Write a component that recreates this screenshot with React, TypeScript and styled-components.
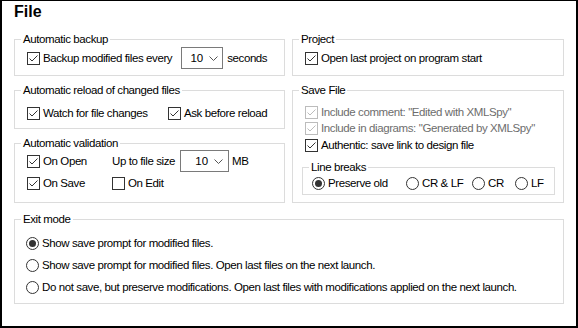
import React from 'react';
import styled, { createGlobalStyle } from 'styled-components';

const GlobalStyle = createGlobalStyle`
  html, body {
    margin: 0;
    padding: 0;
    background: #fff;
  }
  body {
    font-family: "Liberation Sans", Arial, sans-serif;
  }
`;

const Frame = styled.div`
  box-sizing: border-box;
  width: 578px;
  height: 328px;
  border: 2px solid #000;
  border-top-width: 1px;
  padding: 2px 12px 0 12px;
  background: #fff;
  color: #000;
  font-size: 11.5px;
  letter-spacing: -0.4px;
`;

const Title = styled.h1`
  margin: 0 0 11px;
  font-size: 16px;
  line-height: 18px;
  font-weight: bold;
  letter-spacing: 0;
`;

const Columns = styled.div`
  display: grid;
  grid-template-columns: 271px 272px;
  column-gap: 7px;
  align-items: start;
`;

const Column = styled.div`
  display: flex;
  flex-direction: column;
  gap: 7px;
`;

const GroupBox = styled.fieldset<{ $pb: number; $mt?: number; $mx?: string }>`
  margin: ${(p) => p.$mt ?? 0}px ${(p) => p.$mx ?? '0 0'};
  min-width: 0;
  border: 1px solid #dcdcdc;
  padding: 0 0 ${(p) => p.$pb}px 6px;
`;

const Legend = styled.legend`
  padding: 0 2px;
  font-size: 11.5px;
  line-height: 14px;
`;

const Row = styled.div<{ $h: number; $mt?: number; $pl?: number }>`
  display: flex;
  align-items: center;
  height: ${(p) => p.$h}px;
  margin-top: ${(p) => p.$mt ?? 0}px;
  padding-left: ${(p) => p.$pl ?? 6}px;
  white-space: nowrap;
`;

const Item = styled.label<{ $w?: number; $disabled?: boolean }>`
  display: inline-flex;
  align-items: center;
  gap: 3px;
  width: ${(p) => (p.$w ? `${p.$w}px` : 'auto')};
  flex: none;
  color: ${(p) => (p.$disabled ? '#6d6d6d' : '#000')};
  line-height: 14px;
`;

const Text = styled.span<{ $ml?: number }>`
  margin-left: ${(p) => p.$ml ?? 0}px;
  line-height: 14px;
`;

const Combo = styled.div<{ $w: number; $ml: number; $pr: number }>`
  box-sizing: border-box;
  display: flex;
  align-items: center;
  justify-content: flex-end;
  width: ${(p) => p.$w}px;
  height: 22px;
  margin-left: ${(p) => p.$ml}px;
  padding-right: ${(p) => p.$pr}px;
  border: 1px solid #7a7a7a;
  background: #fff;
  letter-spacing: 0;

  svg {
    margin-left: 6px;
  }
`;

const Checkbox: React.FC<{ checked?: boolean; disabled?: boolean }> = ({ checked, disabled }) => {
  const c = disabled ? '#bcbcbc' : '#333';
  return (
    <svg width="13" height="13" viewBox="0 0 13 13">
      <rect x="0.5" y="0.5" width="12" height="12" fill="#fff" stroke={c} />
      {checked && <path d="M2.5 6.5 L5 9 L10.5 3.5" fill="none" stroke={c} strokeWidth="1" />}
    </svg>
  );
};

const Radio: React.FC<{ checked?: boolean }> = ({ checked }) => (
  <svg width="13" height="13" viewBox="0 0 13 13">
    <circle cx="6.5" cy="6.5" r="6" fill="#fff" stroke="#333" />
    {checked && <circle cx="6.5" cy="6.5" r="3.5" fill="#333" />}
  </svg>
);

const Chevron = () => (
  <svg width="9" height="5" viewBox="0 0 9 5">
    <path d="M0.5 0.5 L4.5 4.5 L8.5 0.5" fill="none" stroke="#555" />
  </svg>
);

const Check: React.FC<{ label: string; checked?: boolean; disabled?: boolean; w?: number }> = ({
  label,
  checked,
  disabled,
  w,
}) => (
  <Item $w={w} $disabled={disabled}>
    <Checkbox checked={checked} disabled={disabled} />
    {label}
  </Item>
);

const Option: React.FC<{ label: string; checked?: boolean; w?: number }> = ({ label, checked, w }) => (
  <Item $w={w}>
    <Radio checked={checked} />
    {label}
  </Item>
);

export default function App() {
  return (
    <>
      <GlobalStyle />
      <Frame>
        <Title>File</Title>
        <Columns>
          <Column>
            <GroupBox $pb={6}>
              <Legend>Automatic backup</Legend>
              <Row $h={22} $mt={1}>
                <Check label="Backup modified files every" checked />
                <Combo $w={42} $ml={9} $pr={4}>
                  10
                  <Chevron />
                </Combo>
                <Text $ml={4}>seconds</Text>
              </Row>
            </GroupBox>

            <GroupBox $pb={6}>
              <Legend>Automatic reload of changed files</Legend>
              <Row $h={18} $mt={7}>
                <Check label="Watch for file changes" checked w={141} />
                <Check label="Ask before reload" checked />
              </Row>
            </GroupBox>

            <GroupBox $pb={10}>
              <Legend>Automatic validation</Legend>
              <Row $h={22}>
                <Check label="On Open" checked w={85} />
                <Text>Up to file size</Text>
                <Combo $w={49} $ml={5} $pr={5}>
                  10
                  <Chevron />
                </Combo>
                <Text $ml={3}>MB</Text>
              </Row>
              <Row $h={18} $mt={2}>
                <Check label="On Save" checked w={85} />
                <Check label="On Edit" />
              </Row>
            </GroupBox>
          </Column>

          <Column>
            <GroupBox $pb={6}>
              <Legend>Project</Legend>
              <Row $h={22} $mt={1}>
                <Check label="Open last project on program start" checked />
              </Row>
            </GroupBox>

            <GroupBox $pb={7}>
              <Legend>Save File</Legend>
              <Row $h={16} $mt={7}>
                <Check label={'Include comment: "Edited with XMLSpy"'} checked disabled />
              </Row>
              <Row $h={16}>
                <Check label={'Include in diagrams: "Generated by XMLSpy"'} checked disabled />
              </Row>
              <Row $h={16} $mt={1}>
                <Check label="Authentic: save link to design file" checked />
              </Row>
              <GroupBox $pb={2} $mt={7} $mx="8px 0 3px">
                <Legend>Line breaks</Legend>
                <Row $h={18} $pl={3}>
                  <Option label="Preserve old" checked w={94} />
                  <Option label="CR & LF" w={66} />
                  <Option label="CR" w={43} />
                  <Option label="LF" />
                </Row>
              </GroupBox>
            </GroupBox>
          </Column>
        </Columns>

        <GroupBox $pb={5} $mt={9}>
          <Legend>Exit mode</Legend>
          <Row $h={22} $mt={6} $pl={5}>
            <Option label="Show save prompt for modified files." checked />
          </Row>
          <Row $h={22} $pl={5}>
            <Option label="Show save prompt for modified files. Open last files on the next launch." />
          </Row>
          <Row $h={22} $pl={5}>
            <Option label="Do not save, but preserve modifications. Open last files with modifications applied on the next launch." />
          </Row>
        </GroupBox>
      </Frame>
    </>
  );
}
